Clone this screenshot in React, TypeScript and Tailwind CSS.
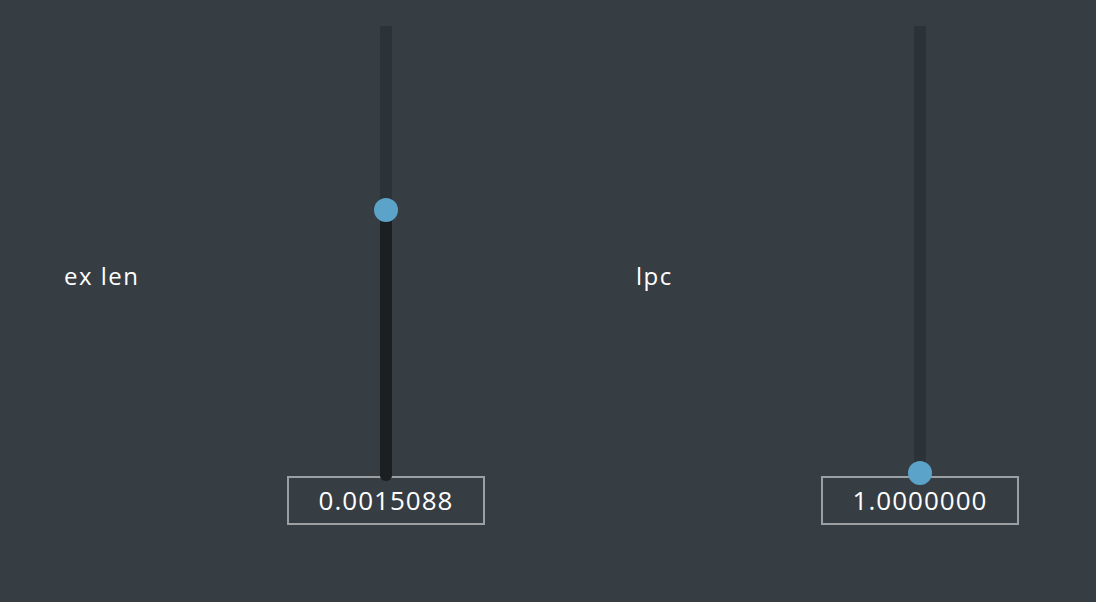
import React from 'react';

interface SliderProps {
  label: string;
  value: string;
  labelWidth: string;
  thumbTop: number; // px from top of track
}

const TRACK_H = 455;

const VerticalSlider: React.FC<SliderProps> = ({ label, value, labelWidth, thumbTop }) => {
  return (
    <div className="flex flex-row">
      <div className={`${labelWidth} flex items-center pb-[50px] text-[24px] font-medium tracking-[1.5px] text-white`}>
        {label}
      </div>
      <div className="flex w-[198px] flex-col items-center pt-[26px]">
        <div className="relative z-10 w-[12px] rounded-b-full bg-[#2b3238]" style={{ height: TRACK_H }}>
          <div
            className="absolute bottom-0 left-0 w-full rounded-b-full bg-[#1b1f22]"
            style={{ top: thumbTop }}
          />
          <div
            className="absolute left-1/2 h-[24px] w-[24px] -translate-x-1/2 -translate-y-1/2 rounded-full bg-[#5ba3c9]"
            style={{ top: thumbTop }}
          />
        </div>
        <div className="-mt-[5px] flex h-[49px] w-[198px] items-center justify-center border-2 border-[#9da0a2] text-[26px] font-medium tracking-[1px] text-white">
          {value}
        </div>
      </div>
    </div>
  );
};

export default function App() {
  return (
    <div
      className="flex h-[602px] w-[1096px] flex-row bg-[#363d43] pl-[64px]"
      style={{ fontFamily: '"Open Sans", "Noto Sans", sans-serif' }}
    >
      <VerticalSlider label="ex len" value="0.0015088" labelWidth="w-[223px]" thumbTop={184} />
      <div className="w-[151px]" />
      <VerticalSlider label="lpc" value="1.0000000" labelWidth="w-[185px]" thumbTop={447} />
    </div>
  );
}
